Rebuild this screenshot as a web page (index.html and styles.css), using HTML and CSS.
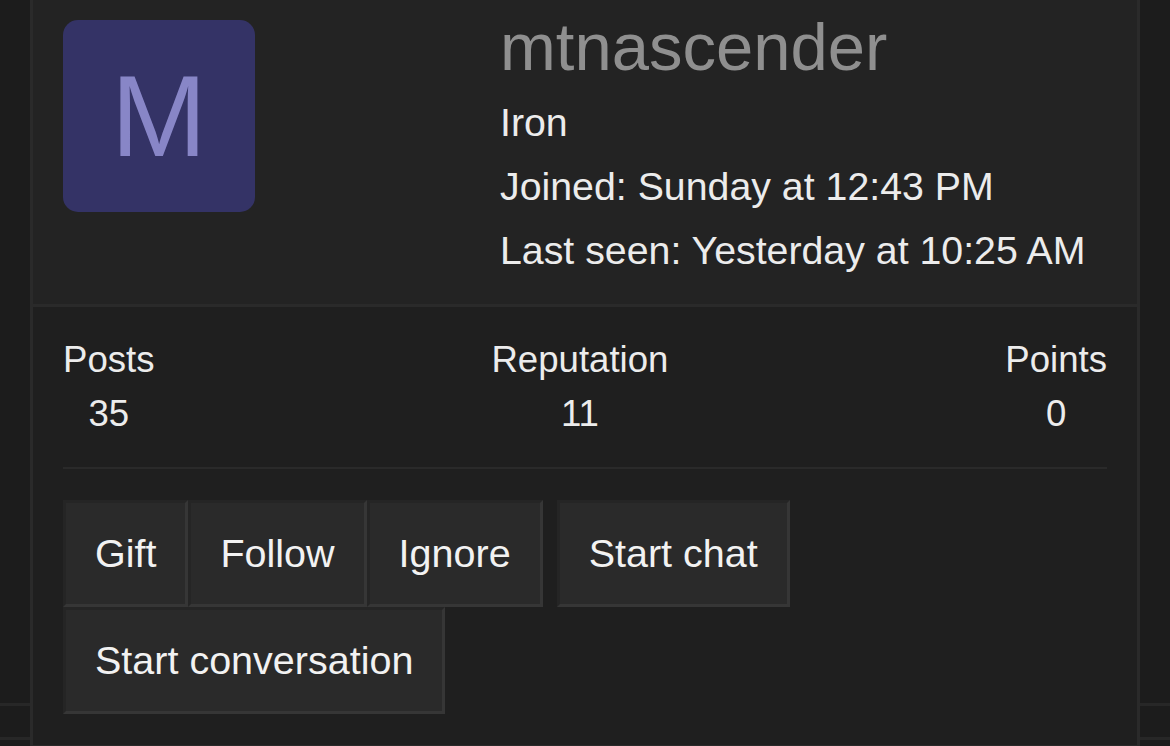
FILE: index.html
```html
<!DOCTYPE html>
<html lang="en">
<head>
<meta charset="utf-8">
<title>mtnascender</title>
<link rel="stylesheet" href="styles.css">
</head>
<body class="page">
  <div class="tooltip">
    <div class="tooltip-header">
      <div class="avatar"><span class="avatar-letter">M</span></div>
      <div class="info">
        <h4 class="name">mtnascender</h4>
        <div class="info-line">Iron</div>
        <div class="info-line">Joined: Sunday at 12:43 PM</div>
        <div class="info-line">Last seen: Yesterday at 10:25 AM</div>
      </div>
    </div>
    <div class="tooltip-body">
      <div class="stats">
        <dl class="stat"><dt class="stat-label">Posts</dt><dd class="stat-value">35</dd></dl>
        <dl class="stat"><dt class="stat-label">Reputation</dt><dd class="stat-value">11</dd></dl>
        <dl class="stat"><dt class="stat-label">Points</dt><dd class="stat-value">0</dd></dl>
      </div>
      <div class="actions">
        <div class="btn-group">
          <a class="btn" href="#">Gift</a>
          <a class="btn" href="#">Follow</a>
          <a class="btn" href="#">Ignore</a>
        </div>
        <a class="btn" href="#">Start chat</a>
        <a class="btn" href="#">Start conversation</a>
      </div>
    </div>
  </div>
</body>
</html>
```
FILE: styles.css
```css
html, body {
  margin: 0;
  padding: 0;
}

.page {
  height: 746px;
  overflow: hidden;
  font-family: "Liberation Sans", Arial, Helvetica, sans-serif;
  background:
    linear-gradient(to bottom,
      transparent 703px, #272727 703px, #272727 706px, transparent 706px,
      transparent 737px, #272727 737px, #272727 740px, transparent 740px),
    #1c1c1c;
}

.tooltip {
  margin: 0 30px;
  border-left: 3px solid #2a2a2a;
  border-right: 3px solid #2a2a2a;
  border-bottom: 3px solid #2a2a2a;
  background: #1f1f1f;
}

.tooltip-header {
  display: grid;
  grid-template-columns: 192px 1fr;
  column-gap: 245px;
  align-items: start;
  padding: 20px 30px 22px 30px;
  background: #232323;
  border-bottom: 3px solid #2a2a2a;
}

.avatar {
  width: 192px;
  height: 192px;
  border-radius: 15px;
  background: #343366;
  display: flex;
  align-items: center;
  justify-content: center;
}

.avatar-letter {
  font-size: 115px;
  line-height: 1;
  color: #8886c7;
}

.info {
  display: flex;
  flex-direction: column;
}

.name {
  margin: 0 0 16px 0;
  font-size: 67px;
  line-height: 54px;
  font-weight: normal;
  color: #8f8f8f;
}

.info-line {
  font-size: 39.3px;
  line-height: 64px;
  color: #ececec;
  white-space: nowrap;
}

.tooltip-body {
  padding: 26px 30px 31px 30px;
}

.stats {
  display: flex;
  justify-content: space-between;
  padding-bottom: 26px;
  border-bottom: 2px solid #2a2a2a;
  margin-bottom: 31px;
}

.stat {
  margin: 0;
  text-align: center;
}

.stat-label {
  font-size: 36.6px;
  line-height: 54px;
  color: #ececec;
}

.stat-value {
  margin: 0;
  font-size: 36.6px;
  line-height: 54px;
  color: #ececec;
}

.actions {
  display: flex;
  flex-wrap: wrap;
  column-gap: 14px;
  row-gap: 0;
}

.btn-group {
  display: flex;
}

.btn {
  display: block;
  padding: 0 29px;
  font-size: 39.5px;
  line-height: 101px;
  color: #f2f2f2;
  text-decoration: none;
  background: #2a2a2a;
  border: 3px solid;
  border-color: #252525 #363636 #363636 #252525;
  white-space: nowrap;
}
```
